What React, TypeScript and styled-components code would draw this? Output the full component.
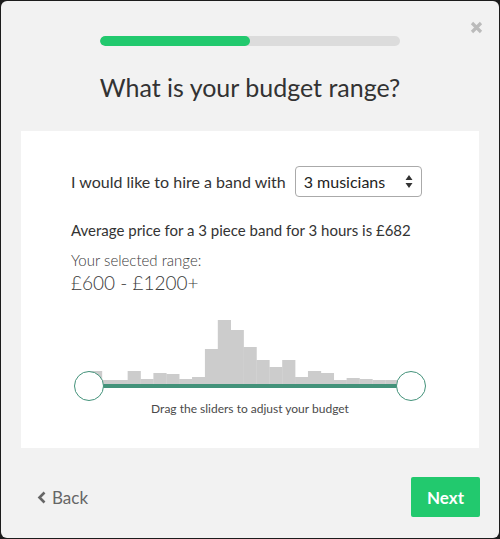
import styled, { createGlobalStyle } from "styled-components";

const GlobalStyle = createGlobalStyle`
  html, body {
    margin: 0;
    padding: 0;
    background: #1c1c1c;
  }
  body {
    font-family: Lato, "Open Sans", sans-serif;
  }
`;

const bars = [
  13, 4, 4, 13, 5, 11, 10, 5, 7, 35, 64, 54, 37, 24, 17, 24, 7, 13, 11, 4, 6,
  5, 4, 4, 4,
];

const Modal = styled.div`
  position: relative;
  box-sizing: border-box;
  width: 498px;
  height: 537px;
  margin: 1px;
  background: #f2f2f2;
  border-radius: 6px;
  display: flex;
  flex-direction: column;
  align-items: center;
  padding-top: 35px;
`;

const Close = styled.button`
  position: absolute;
  top: 20px;
  right: 16px;
  width: 13px;
  height: 13px;
  padding: 0;
  border: none;
  background: none;
  cursor: pointer;
`;

const Progress = styled.div`
  width: 300px;
  height: 10px;
  border-radius: 5px;
  background: #dcdcdc;
  overflow: hidden;
`;

const ProgressFill = styled.div<{ $pct: number }>`
  width: ${(p) => p.$pct}%;
  height: 100%;
  border-radius: 5px;
  background: #22c96e;
`;

const Title = styled.h1`
  margin: 25px 0 0;
  font-size: 25px;
  line-height: 32px;
  font-weight: 400;
  color: #333;
`;

const Panel = styled.div`
  box-sizing: border-box;
  align-self: stretch;
  margin: 28px 20px 0;
  background: #fff;
  padding: 35px 50px 31px;
`;

const HireRow = styled.div`
  display: flex;
  align-items: center;
  gap: 9px;
  font-size: 16px;
  color: #333;
`;

const Select = styled.div`
  box-sizing: border-box;
  width: 127px;
  height: 31px;
  border: 1px solid #aaa;
  border-radius: 4px;
  display: flex;
  align-items: center;
  justify-content: space-between;
  padding: 0 8px 0 8px;
  font-size: 16px;
  color: #222;
`;

const Average = styled.p`
  margin: 23px 0 0;
  font-size: 15px;
  line-height: 20px;
  color: #333;
`;

const RangeLabel = styled.p`
  margin: 10px 0 0;
  font-size: 15px;
  line-height: 20px;
  font-weight: 300;
  color: #3a3a3a;
`;

const RangeValue = styled.p`
  margin: 1px 0 0;
  font-size: 19px;
  line-height: 24px;
  font-weight: 300;
  color: #3a3a3a;
`;

const Slider = styled.div`
  position: relative;
  width: 322px;
  margin: 25px auto 0;
`;

const Chart = styled.svg`
  display: block;
`;

const Track = styled.div`
  height: 4px;
  background: #43927a;
`;

const Handle = styled.div<{ $side: "left" | "right" }>`
  position: absolute;
  bottom: -13px;
  ${(p) => p.$side}: -15px;
  box-sizing: border-box;
  width: 30px;
  height: 30px;
  border-radius: 50%;
  background: #fff;
  border: 1px solid #43927a;
`;

const Hint = styled.p`
  margin: 13px 0 0;
  text-align: center;
  font-size: 12px;
  line-height: 16px;
  color: #4a4a4a;
`;

const Footer = styled.div`
  align-self: stretch;
  display: flex;
  align-items: center;
  justify-content: space-between;
  margin: 29px 19px 0 36px;
`;

const BackLink = styled.a`
  display: flex;
  align-items: center;
  gap: 6px;
  font-size: 17px;
  color: #666;
  cursor: pointer;
`;

const NextButton = styled.button`
  width: 69px;
  height: 40px;
  border: none;
  border-radius: 2px;
  background: #22c96e;
  color: #fff;
  font-family: inherit;
  font-size: 17px;
  font-weight: 700;
  cursor: pointer;
`;

function App() {
  const w = 322 / bars.length;
  return (
    <>
      <GlobalStyle />
      <Modal>
        <Close aria-label="close">
          <svg width="13" height="13" viewBox="0 0 13 13">
            <path
              d="M2 2 L11 11 M11 2 L2 11"
              stroke="#bbb"
              strokeWidth="3.2"
            />
          </svg>
        </Close>
        <Progress>
          <ProgressFill $pct={50} />
        </Progress>
        <Title>What is your budget range?</Title>
        <Panel>
          <HireRow>
            I would like to hire a band with
            <Select>
              3 musicians
              <svg width="8" height="13" viewBox="0 0 8 13">
                <path d="M4 0 L7.5 5 L0.5 5 Z M4 13 L7.5 8 L0.5 8 Z" fill="#333" />
              </svg>
            </Select>
          </HireRow>
          <Average>Average price for a 3 piece band for 3 hours is £682</Average>
          <RangeLabel>Your selected range:</RangeLabel>
          <RangeValue>£600 - £1200+</RangeValue>
          <Slider>
            <Chart width="322" height="64" viewBox="0 0 322 64">
              {bars.map((h, i) => (
                <rect
                  key={i}
                  x={i * w}
                  y={64 - h}
                  width={w + 0.3}
                  height={h}
                  fill="#cccccc"
                />
              ))}
            </Chart>
            <Track />
            <Handle $side="left" />
            <Handle $side="right" />
          </Slider>
          <Hint>Drag the sliders to adjust your budget</Hint>
        </Panel>
        <Footer>
          <BackLink>
            <svg width="9" height="13" viewBox="0 0 9 13">
              <path
                d="M7.5 1.5 L2.5 6.5 L7.5 11.5"
                fill="none"
                stroke="#666"
                strokeWidth="2.6"
              />
            </svg>
            Back
          </BackLink>
          <NextButton>Next</NextButton>
        </Footer>
      </Modal>
    </>
  );
}

export default App;
